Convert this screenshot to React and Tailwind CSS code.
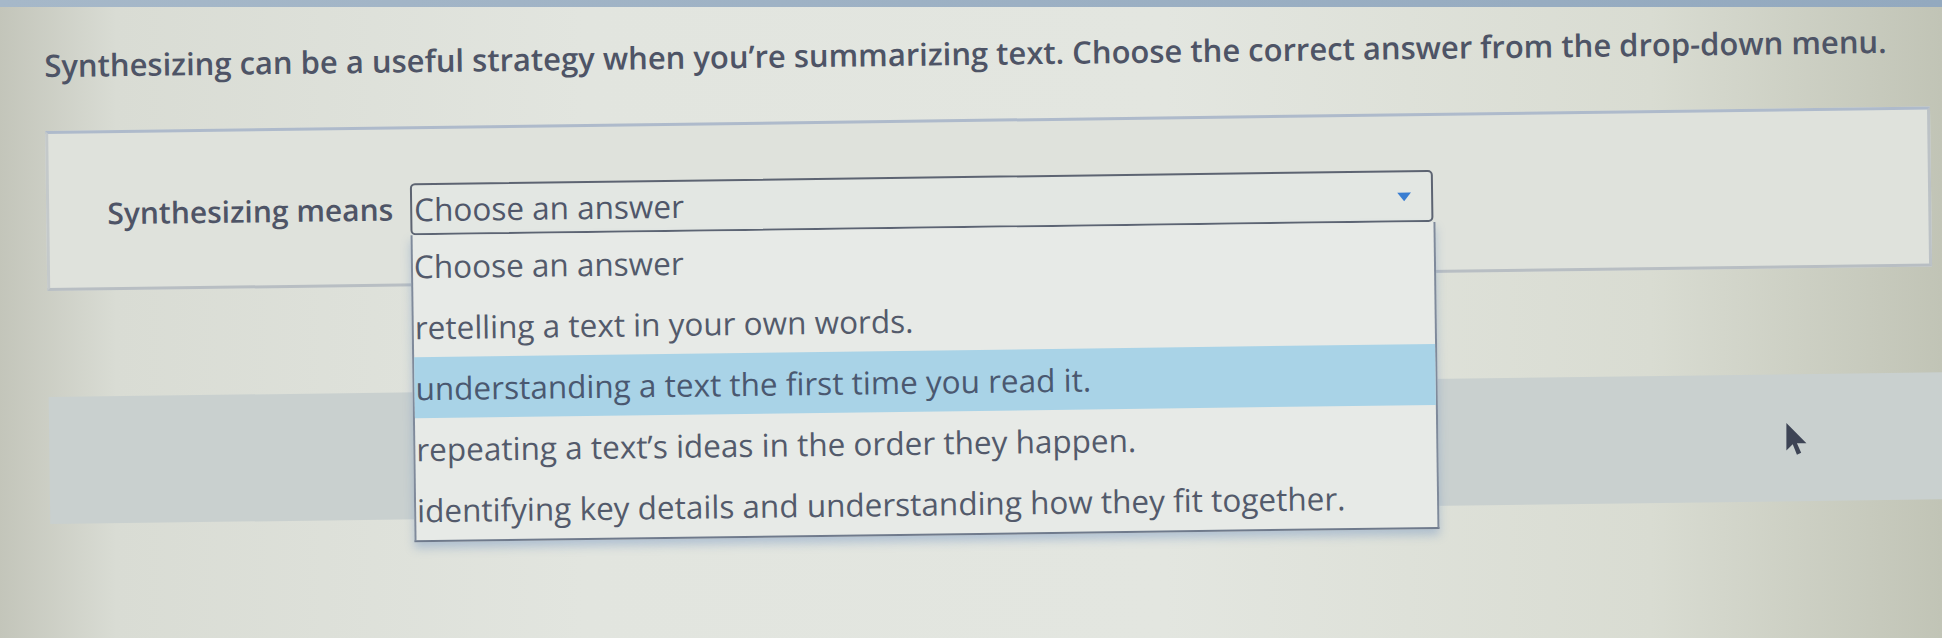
import React from 'react';

const options = [
  'Choose an answer',
  'retelling a text in your own words.',
  'understanding a text the first time you read it.',
  'repeating a text\u2019s ideas in the order they happen.',
  'identifying key details and understanding how they fit together.',
];

function Cursor() {
  return (
    <svg width="28" height="38" viewBox="0 0 26 36" className="absolute left-[1784px] top-[421px]">
      <path d="M2 2 L2 28 L8 22 L12 32 L16 30 L12 21 L21 21 Z" fill="#3d4455" />
    </svg>
  );
}

export default function App() {
  const selected = 2;

  return (
    <div
      className="relative h-[638px] w-full overflow-hidden bg-[linear-gradient(90deg,#c3c5ba_0%,#d9dcd4_6%,#e2e5df_30%,#e3e6e0_60%,#d9dcd2_85%,#c1c4b6_100%)]"
      style={{ fontFamily: '"Open Sans", "Noto Sans", sans-serif' }}
    >
      <div className="h-[7px] bg-[linear-gradient(90deg,#a6b8c9,#93a9bf)]" />

      <div className="-ml-[19px] h-[620px] w-[1980px] -rotate-[0.75deg]">
        {/* Question text */}
        <h1 className="mt-[26px] pl-[67px] text-[31px] font-semibold leading-[40px] text-[#4e5466] whitespace-nowrap">
          Synthesizing can be a useful strategy when you’re summarizing text. Choose the correct answer from the drop-down menu.
        </h1>

        {/* Answer panel */}
        <div className="ml-[67px] mt-[46px] h-[160px] w-[1885px] border-[3px] border-t-[#aebacb] border-l-[#c4c9ca] border-r-[#bcc2c6] border-b-[#b8bec3] bg-[#dfe2dc] pt-[54px]">
          <div className="flex items-center">
            <div className="flex w-[361px] justify-end pr-[17px]">
              <span className="text-[30px] font-semibold leading-[40px] text-[#4e5466] whitespace-nowrap">Synthesizing means</span>
            </div>

            <div className="relative z-10 w-[1023px]">
              <div className="flex h-[52px] items-center justify-between rounded-[5px] border-2 border-[#5d6472] bg-[#e3e7e3] pl-[2px] pr-[20px]">
                <span className="text-[31.5px] font-medium leading-[40px] text-[#50576a] whitespace-nowrap">Choose an answer</span>
                <svg width="14" height="9" viewBox="0 0 14 9">
                  <path d="M0 0 L14 0 L7 9 Z" fill="#3a7ed2" />
                </svg>
              </div>

              {/* Open drop-down list */}
              <ul className="absolute left-0 top-full w-[1025px] border-x-2 border-b-2 border-x-[#7f8a9b] border-b-[#6f7a8c] bg-[#e7eae7] shadow-[0_6px_10px_rgba(90,130,185,0.35)]">
                {options.map((o, i) => (
                  <li
                    key={o}
                    className={
                      'flex h-[61px] items-center pl-[1px] text-[31.5px] font-medium leading-[40px] whitespace-nowrap ' +
                      (i === selected ? 'bg-[#a9d3e7] text-[#4a5870]' : 'text-[#535a6b]')
                    }
                  >
                    {o}
                  </li>
                ))}
              </ul>
            </div>
          </div>
        </div>

        {/* Next row stripe */}
        <div className="ml-[67px] mt-[106px] h-[127px] w-[1913px] bg-[#c9d0cf]" />
      </div>

      <Cursor />
    </div>
  );
}
